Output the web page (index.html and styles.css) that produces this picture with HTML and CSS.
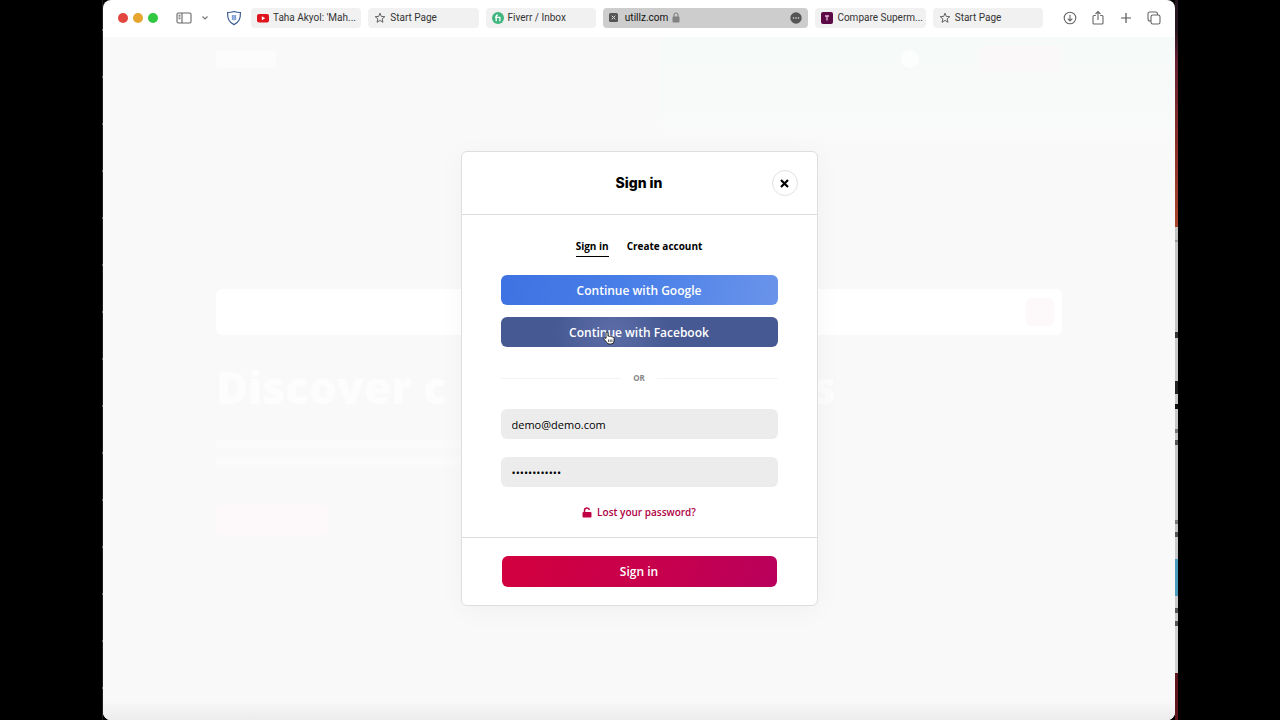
FILE: index.html
```html
<!DOCTYPE html>
<html lang="en">
<head>
  <meta charset="UTF-8">
  <meta name="viewport" content="width=device-width, initial-scale=1.0">
  <title>Sign in</title>
  <link rel="stylesheet" href="styles.css">
</head>
<body>
<div class="desktop">
  <div class="edge-left"></div>
  <div class="window">

    <!-- Browser toolbar -->
    <header class="toolbar">
      <div class="lights">
        <span class="light red"></span>
        <span class="light yellow"></span>
        <span class="light green"></span>
      </div>
      <button class="tool sidebar-btn" aria-label="Sidebar">
        <svg width="16" height="12" viewBox="0 0 16 12" fill="none" stroke="#666" stroke-width="1.1"><rect x="1" y="1" width="14" height="10" rx="1.5"/><path d="M6 1v10M2.5 3.2h2M2.5 5h2M2.5 6.8h2"/></svg>
      </button>
      <button class="tool chevron-btn" aria-label="Tab groups">
        <svg width="8" height="6" viewBox="0 0 8 6" fill="none" stroke="#777" stroke-width="1.2"><path d="M1.5 1.5L4 4l2.500-2.500"/></svg>
      </button>
      <button class="tool shield-btn" aria-label="Privacy">
        <svg width="16" height="16" viewBox="0 0 16 16" fill="none"><path d="M8 1.500C6 2.200 4 2.500 1.600 2.500 1.300 8 3 12.500 8 14.600 13 12.500 14.700 8 14.400 2.500 12 2.500 10 2.200 8 1.500z" stroke="#3d5c94" stroke-width="1.2"/><path d="M6.500 5v5M8 5v5.500M9.500 5v5" stroke="#7f9fd6" stroke-width="1.3"/></svg>
      </button>

      <nav class="tabs">
        <a class="tab" href="#">
          <svg width="12" height="12" viewBox="0 0 12 12"><rect y="2" width="12" height="8.500" rx="2" fill="#e0141c"/><path d="M4.800 4.300v4L8.200 6.300z" fill="#fff"/></svg>
          <span>Taha Akyol: 'Mah...</span>
        </a>
        <a class="tab" href="#">
          <svg width="12" height="12" viewBox="0 0 12 12" fill="none" stroke="#555" stroke-width=".9"><path d="M6 1.200l1.300 3.200 3.500.300-2.700 2.200.900 3.400L6 8.400l-3 1.900.900-3.400-2.700-2.200 3.500-.300z"/></svg>
          <span>Start Page</span>
        </a>
        <a class="tab" href="#">
          <svg width="12" height="12" viewBox="0 0 12 12"><circle cx="6" cy="6" r="6" fill="#3fb67e"/><path d="M4.200 9.200V4.600q0-1.600 1.600-1.600M3 5.400h4.900v3.800" fill="none" stroke="#fff" stroke-width="1.300"/></svg>
          <span>Fiverr / Inbox</span>
        </a>
        <a class="tab active" href="#">
          <svg width="9" height="9" viewBox="0 0 9 9"><rect width="9" height="9" rx="1.500" fill="#555"/><path d="M2.700 2.700l3.600 3.600M6.300 2.700L2.700 6.300" stroke="#ddd"/></svg>
          <span class="address">utillz.com</span>
          <svg class="lock" width="8" height="11" viewBox="0 0 8 11"><rect x=".5" y="4.500" width="7" height="6" rx="1" fill="#828282"/><path d="M2 5V3q0-2 2-2t2 2v2" fill="none" stroke="#828282" stroke-width="1.100"/></svg>
          <svg class="more" width="12" height="12" viewBox="0 0 12 12"><circle cx="6" cy="6" r="5.700" fill="#555"/><g fill="#ddd"><circle cx="3.500" cy="6" r=".8"/><circle cx="6" cy="6" r=".8"/><circle cx="8.500" cy="6" r=".8"/></g></svg>
        </a>
        <a class="tab" href="#">
          <svg width="12" height="12" viewBox="0 0 12 12"><rect width="12" height="12" rx="2" fill="#5c0a45"/><path d="M4 4h4M6 4v4.500" stroke="#e9b9dc" stroke-width="1.300"/></svg>
          <span>Compare Superm...</span>
        </a>
        <a class="tab" href="#">
          <svg width="12" height="12" viewBox="0 0 12 12" fill="none" stroke="#555" stroke-width=".9"><path d="M6 1.200l1.300 3.200 3.500.300-2.700 2.200.900 3.400L6 8.400l-3 1.900.900-3.400-2.700-2.200 3.500-.300z"/></svg>
          <span>Start Page</span>
        </a>
      </nav>

      <div class="actions">
        <button class="tool" aria-label="Downloads">
          <svg width="14" height="14" viewBox="0 0 14 14" fill="none" stroke="#666" stroke-width="1.100"><circle cx="7" cy="7" r="5.800"/><path d="M7 3.800v6M4.700 7.600L7 9.900l2.300-2.300"/></svg>
        </button>
        <button class="tool" aria-label="Share">
          <svg width="14" height="16" viewBox="0 0 14 16" fill="none" stroke="#666" stroke-width="1.100"><path d="M4.800 5.500H3q-1 0-1 1V13q0 1 1 1h8q1 0 1-1V6.500q0-1-1-1H9.200M7 10V1.500M4.500 4L7 1.500 9.500 4"/></svg>
        </button>
        <button class="tool" aria-label="New tab">
          <svg width="14" height="14" viewBox="0 0 14 14" fill="none" stroke="#555" stroke-width="1.200"><path d="M7 2v10M2 7h10"/></svg>
        </button>
        <button class="tool" aria-label="Show tabs">
          <svg width="14" height="14" viewBox="0 0 14 14" fill="none" stroke="#666" stroke-width="1.100"><rect x="4" y="4" width="9" height="9" rx="1.800"/><path d="M4 10H3q-2 0-2-2V3q0-2 2-2h5.500q2 0 2 2v1"/></svg>
        </button>
      </div>
    </header>

    <main class="page">
      <!-- Faded page behind the dialog -->
      <div class="backdrop" aria-hidden="true">
        <div class="site-header">
          <span class="logo"></span>
          <span class="avatar"></span>
          <span class="join"></span>
        </div>
        <div class="search"><span class="search-btn"></span></div>
        <div class="headline"><span>Discover c</span><span>s</span></div>
        <div class="lines">
          <span class="line"></span>
          <span class="line"></span>
        </div>
        <div class="cta"></div>
      </div>

      <!-- Sign in dialog -->
      <div class="overlay">
        <form class="modal">
          <div class="modal-header">
            <h1 class="modal-title">Sign in</h1>
            <button type="button" class="close" aria-label="Close">
              <svg width="9" height="9" viewBox="0 0 9 9" stroke="#000" stroke-width="2.200"><path d="M1 1l7 7M8 1L1 8"/></svg>
            </button>
          </div>

          <div class="modal-body">
            <div class="switch">
              <a class="switch-link current" href="#">Sign in</a>
              <a class="switch-link" href="#">Create account</a>
            </div>
            <div class="social">
              <button type="button" class="btn google">Continue with Google</button>
              <button type="button" class="btn facebook">Continue with Facebook</button>
            </div>
            <div class="or"><span>OR</span></div>
            <div class="fields">
              <input class="field" type="email" value="demo@demo.com" aria-label="Email">
              <input class="field" type="password" value="demodemodemo" aria-label="Password">
            </div>
            <a class="lost" href="#">
              <svg width="10" height="11" viewBox="0 0 10 11"><rect x=".5" y="5" width="9" height="5.500" rx="1" fill="#c00045"/><path d="M2.500 5V3.400Q2.500 1 5 1q2 0 2.400 2" fill="none" stroke="#c00045" stroke-width="1.500"/></svg>
              <span>Lost your password?</span>
            </a>
          </div>

          <div class="modal-footer">
            <button type="button" class="btn submit">Sign in</button>
          </div>

          <svg class="cursor" width="12" height="14" viewBox="0 0 12 14"><path d="M3 7.500V2q0-1.300 1-1.300T5 2v3.200q.8-.6 1.500.2.900-.6 1.600.3 1-.5 1.500.4 1.500-.3 1.500 1.200V10q0 3-3 3H6Q4.500 13 3.500 11.200L1 8.200q-.5-1 .4-1.400.8-.3 1.600.7z" fill="#fff" stroke="#111" stroke-width=".9"/><path d="M5.500 8.500v2.500M7.200 8.500v2.500M8.900 8.500v2.500" stroke="#111" stroke-width=".7"/></svg>
        </form>
      </div>
    </main>
  </div>
  <div class="edge-right"></div>
</div>
</body>
</html>
```
FILE: styles.css
```css
* {
  box-sizing: border-box;
}
body {
  margin: 0;
  background: #000;
  font-family: "Open Sans", sans-serif;
  color: #000;
}
a {
  color: inherit;
  text-decoration: none;
}
button {
  font-family: inherit;
  border: none;
  padding: 0;
  cursor: pointer;
}
svg {
  display: block;
  flex: none;
}

/* Desktop around the browser window */
.desktop {
  display: flex;
  min-height: 100vh;
  padding: 0 102px;
}
.edge-left {
  width: 1px;
  background: repeating-linear-gradient(#222 0 29px, #666 29px 31px, #222 31px 47px);
}
.edge-right {
  width: 3px;
  background: linear-gradient(
    #261620 0 30px, #642032 60px, #8c3028 150px, #a8452c 227px,
    #c4c2c0 227px 240px, #999 240px 242px, #c4c4c6 242px 332px,
    #333 332px 338px, #c8c8ca 338px 381px, #222 381px 394px,
    #c8c8ca 394px 404px, #111 404px 409px, #c8c8ca 409px 429px,
    #777 429px 433px, #c4c4c6 433px 440px, #555 440px 445px,
    #c4c4c6 445px 520px, #777 520px 524px, #c4c4c6 524px 532px,
    #555 532px 537px, #c8c8ca 537px 559px, #4c9cc0 559px 596px,
    #c8c8ca 596px 608px, #555 608px 613px, #c8c8ca 613px 621px,
    #555 621px 626px, #d0d0d0 626px 673px, #5c161c 673px);
}
.window {
  flex: 1;
  display: flex;
  flex-direction: column;
  min-width: 0;
  background: #fff;
  border-radius: 8px;
  overflow: hidden;
}

/* Toolbar */
.toolbar {
  display: flex;
  align-items: center;
  height: 37px;
  padding: 0 14px 2px 15px;
}
.lights {
  display: flex;
  gap: 5px;
}
.light {
  width: 10px;
  height: 10px;
  border-radius: 50%;
}
.red {
  background: #e2463f;
}
.yellow {
  background: #e5a52f;
}
.green {
  background: #2fc840;
}
.tool {
  display: grid;
  place-items: center;
  background: none;
}
.sidebar-btn {
  margin-left: 18px;
}
.chevron-btn {
  margin-left: 9px;
}
.shield-btn {
  margin-left: 17px;
}
.tabs {
  flex: 1;
  display: flex;
  gap: 7px;
  margin: 0 20px 0 9px;
  min-width: 0;
}
.tab {
  flex: 98 1 0;
  display: flex;
  align-items: center;
  gap: 4px;
  min-width: 0;
  height: 20px;
  padding: 0 6px;
  border-radius: 4px;
  background: #f1f1f1;
  color: #333;
  font: 10px/20px Roboto, sans-serif;
  white-space: nowrap;
  overflow: hidden;
}
.active {
  flex-grow: 193;
  background: #cdcdcd;
}
.address {
  margin-left: 3px;
  color: #111;
}
.more {
  margin-left: auto;
}
.actions {
  display: flex;
  gap: 14px;
}

/* Faded page */
.page {
  position: relative;
  flex: 1;
  background:
    linear-gradient(transparent calc(100% - 20px), #ececec),
    linear-gradient(#f6faf9, #f9f9f9 110px) right top / 48% 110px no-repeat,
    #f9f9f9;
}
.backdrop {
  max-width: 846px;
  margin: 0 auto;
}
.site-header {
  display: flex;
  align-items: center;
  gap: 60px;
  height: 44px;
}
.logo {
  width: 60px;
  height: 18px;
  margin-right: auto;
  border-radius: 4px;
  background: #fcfcfc;
}
.avatar {
  width: 18px;
  height: 18px;
  border-radius: 50%;
  background: #fcfdfd;
}
.join {
  width: 83px;
  height: 26px;
  border-radius: 5px;
  background: #fbf8f9;
}
.search {
  display: flex;
  align-items: center;
  justify-content: flex-end;
  height: 46px;
  margin-top: 208px;
  padding-right: 8px;
  border-radius: 6px;
  background: #fff;
}
.search-btn {
  width: 28px;
  height: 28px;
  border-radius: 6px;
  background: #fdf8f9;
}
.headline {
  display: flex;
  justify-content: space-between;
  width: 620px;
  margin-top: 22px;
  color: #fdfdfd;
  font-size: 44px;
  font-weight: 800;
  line-height: 60px;
}
.lines {
  display: grid;
  gap: 9px;
  margin-top: 23px;
}
.line {
  width: 430px;
  height: 8px;
  background: #fbfbfb;
}
.cta {
  width: 112px;
  height: 30px;
  margin-top: 40px;
  border-radius: 5px;
  background: #fdf8f9;
}

/* Dialog */
.overlay {
  position: absolute;
  inset: 0;
  display: grid;
  place-items: center;
}
.modal {
  position: relative;
  width: 357px;
  border: 1px solid #dedede;
  border-radius: 6px;
  background: #fff;
  box-shadow: 0 4px 28px rgba(0, 0, 0, 0.04);
}
.modal-header {
  position: relative;
  display: grid;
  place-items: center;
  height: 63px;
  border-bottom: 1px solid #dedede;
}
.modal-title {
  margin: 0;
  font: 800 14px/20px Inter, sans-serif;
}
.close {
  position: absolute;
  top: 18px;
  right: 19px;
  display: grid;
  place-items: center;
  width: 26px;
  height: 26px;
  border: 1px solid #e2e2e2;
  border-radius: 50%;
  background: #fff;
}
.modal-body {
  padding: 23px 39px 17px;
}
.switch {
  display: flex;
  justify-content: center;
  gap: 18px;
  font-size: 10px;
  font-weight: 700;
  line-height: 16px;
}
.switch-link {
  padding-bottom: 2px;
  border-bottom: 1px solid transparent;
}
.current {
  border-color: #000;
}
.social {
  display: grid;
  gap: 12px;
  margin-top: 18px;
}
.btn {
  width: 100%;
  height: 30px;
  border-radius: 6px;
  color: #fff;
  font-size: 12px;
  font-weight: 600;
}
.google {
  background: linear-gradient(100deg, #3e72e2, #4a80e8 50%, #6b94ea);
}
.facebook {
  background: radial-gradient(circle at 40% 50%, #5b6ca6, #475993 35%);
}
.or {
  display: flex;
  align-items: center;
  gap: 12px;
  margin-top: 24px;
  color: #888;
  font-size: 8px;
  font-weight: 700;
  line-height: 14px;
}
.or::before,
.or::after {
  content: "";
  flex: 1;
  height: 1px;
  background: #f4f4f4;
}
.fields {
  display: grid;
  gap: 18px;
  margin-top: 24px;
}
.field {
  width: 100%;
  height: 30px;
  padding: 0 11px;
  border: none;
  border-radius: 6px;
  background: #ececec;
  color: #000;
  font: 500 11px "Open Sans", sans-serif;
  outline: none;
}
.lost {
  display: flex;
  align-items: center;
  justify-content: center;
  gap: 5px;
  margin-top: 17px;
  color: #b0003f;
  font-size: 10px;
  font-weight: 600;
  line-height: 16px;
}
.modal-footer {
  padding: 18px 40px;
  border-top: 1px solid #dedede;
}
.submit {
  display: block;
  height: 31px;
  background: linear-gradient(110deg, #d2003e, #c6004e 60%, #b8005c);
}

/* Mouse pointer over the Facebook button */
.cursor {
  position: absolute;
  top: 179px;
  left: 141px;
}
```
